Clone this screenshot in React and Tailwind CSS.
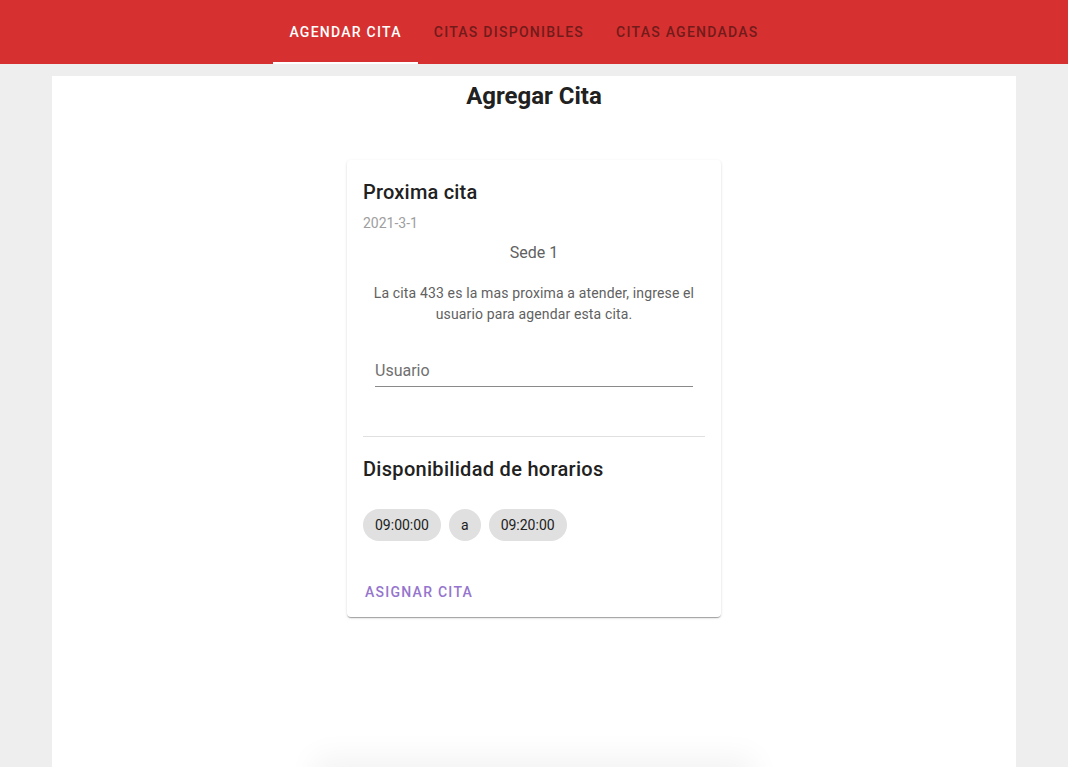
const TABS = ['Agendar cita', 'Citas disponibles', 'Citas agendadas'];

export default function App() {
  return (
    <div className="min-h-screen bg-[#eeeeee] overflow-hidden" style={{ fontFamily: 'Roboto, "Liberation Sans", sans-serif' }}>
      {/* ── Header tabs ── */}
      <header className="h-16 bg-[#d73030] flex justify-center">
        <nav className="flex h-full pr-[20px]">
          {TABS.map((t, i) => (
            <div
              key={t}
              className={`relative flex items-center px-4 h-full text-[14px] font-medium uppercase tracking-[0.09em] ${
                i === 0 ? 'text-white' : 'text-[#721b1b]'
              }`}
            >
              {t}
              {i === 0 && <span className="absolute left-0 right-0 bottom-0 h-[2px] bg-white" />}
            </div>
          ))}
        </nav>
      </header>

      {/* ── Main panel ── */}
      <main className="mx-[52px] mt-3 bg-white min-h-[720px] flex flex-col items-center">
        <h1 className="text-[24px] font-bold text-[#212121] leading-10">Agregar Cita</h1>

        <div className="mt-[44px] w-[374px] bg-white rounded shadow-[0_2px_1px_-1px_rgba(0,0,0,0.2),0_1px_1px_0_rgba(0,0,0,0.14),0_1px_3px_0_rgba(0,0,0,0.12)]">
          <div className="px-4 pt-4">
            <h2 className="text-[20px] font-medium tracking-[0.01em] text-[#212121] leading-8">Proxima cita</h2>
            <p className="mt-[5px] text-[14px] leading-5 text-[#9e9e9e]">2021-3-1</p>
            <p className="mt-2 text-[16px] leading-6 text-[#616161] text-center">Sede 1</p>
            <p className="mt-[18px] text-[14px] leading-[21px] tracking-[0.01em] text-[#616161] text-center">
              La cita 433 es la mas proxima a atender, ingrese el usuario para agendar esta cita.
            </p>
            <div className="mx-3 mt-[30px]">
              <input
                placeholder="Usuario"
                className="w-full h-8 text-[16px] text-[#212121] placeholder:text-[#707070] border-b border-[#8a8a8a] outline-none bg-transparent"
              />
            </div>
            <div className="mt-[49px] h-px bg-[#e0e0e0]" />
            <h2 className="mt-4 text-[20px] font-medium tracking-[0.015em] text-[#212121] leading-8">Disponibilidad de horarios</h2>
            <div className="mt-6 flex gap-2">
              {['09:00:00', 'a', '09:20:00'].map(c => (
                <span key={c} className="h-8 px-3 rounded-full bg-[#e0e0e0] text-[14px] text-[#212121] flex items-center">
                  {c}
                </span>
              ))}
            </div>
          </div>
          <div className="px-[10px] pt-[33px] pb-[7px]">
            <button className="h-9 px-2 text-[14px] font-medium uppercase tracking-[0.09em] text-[#9575cd]">
              Asignar cita
            </button>
          </div>
        </div>

        <div className="mt-[150px] w-[420px] h-10 bg-white shadow-[0_0_30px_10px_rgba(0,0,0,0.05)]" />
      </main>
    </div>
  );
}
